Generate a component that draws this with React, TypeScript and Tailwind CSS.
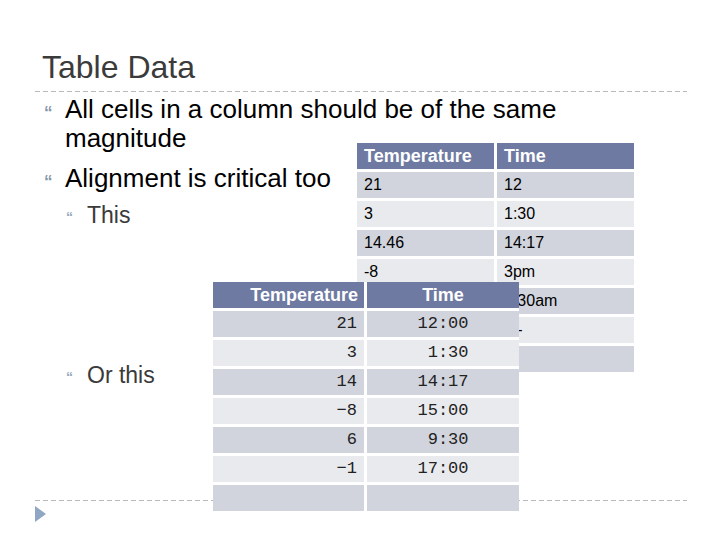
import React from 'react';

type Row = [string, string];

const looseRows: Row[] = [
  ['21', '12'],
  ['3', '1:30'],
  ['14.46', '14:17'],
  ['-8', '3pm'],
  ['6', '9:30am'],
  ['-1', '5:-'],
  ['', ''],
];

const alignedRows: Row[] = [
  ['21', '12:00'],
  ['3', ' 1:30'],
  ['14', '14:17'],
  ['\u22128', '15:00'],
  ['6', ' 9:30'],
  ['\u22121', '17:00'],
  ['', ''],
];

const Bullet = ({ small }: { small?: boolean }) => (
  <span
    className={
      small
        ? 'w-[21px] shrink-0 pt-[2px] text-[14px] font-bold text-[#9aa9ba]'
        : 'w-[21px] shrink-0 pt-[3px] text-[17px] font-bold text-[#8797ab]'
    }
  >
    {'\u201C'}
  </span>
);

const DashedLine = () => (
  <div className="ml-[35px] w-[652px] h-px bg-[repeating-linear-gradient(90deg,#b8b8b8_0_5px,transparent_5px_8px)]" />
);

export default function App() {
  return (
    <div className="relative w-[720px] h-[540px] bg-white flex flex-col font-['Liberation_Sans',Arial,sans-serif] overflow-hidden">
      {/* Title */}
      <h1 className="ml-[42px] mt-[51px] text-[32px] leading-[32px] text-[#3b3b3b]">Table Data</h1>
      <div className="mt-[8px]">
        <DashedLine />
      </div>

      {/* Bullets */}
      <ul className="ml-[44px] mt-[3px] flex flex-col">
        <li className="flex items-start text-[26px] leading-[29px] text-black">
          <Bullet />
          <span className="flex flex-col items-start">
            <span>All cells in a column should be of the same</span>
            <span>magnitude</span>
          </span>
        </li>
        <li className="flex items-start mt-[11px] text-[26px] leading-[29px] text-black">
          <Bullet />
          <span>Alignment is critical too</span>
        </li>
        <li className="flex items-start ml-[22px] mt-[6px] text-[23px] leading-[27px] text-[#3a3a3a]">
          <Bullet small />
          <span>This</span>
        </li>
        <li className="flex items-start ml-[22px] mt-[131px] text-[23px] leading-[27px] text-[#3a3a3a]">
          <Bullet small />
          <span>Or this</span>
        </li>
      </ul>

      {/* Footer */}
      <div className="mt-auto pb-[18px] flex flex-col gap-[5px]">
        <DashedLine />
        <svg className="ml-[35px]" width="12" height="16" viewBox="0 0 12 16">
          <polygon points="0,0 11,8 0,16" fill="#8fa6c4" />
        </svg>
      </div>

      {/* Loose table (behind) */}
      <div className="absolute left-[357px] top-[143px] z-10 grid grid-cols-[137px_137px] gap-[3px] bg-white">
        <div className="h-[26px] bg-[#6e7aa2] pl-[7px] text-[18px] leading-[26px] font-bold text-white">Temperature</div>
        <div className="h-[26px] bg-[#6e7aa2] pl-[7px] text-[18px] leading-[26px] font-bold text-white">Time</div>
        {looseRows.map((r, i) => (
          <React.Fragment key={i}>
            <div className={`h-[26px] pl-[7px] text-[16px] leading-[26px] text-black ${i % 2 === 0 ? 'bg-[#d1d4dd]' : 'bg-[#e9eaee]'}`}>{r[0]}</div>
            <div className={`h-[26px] pl-[7px] text-[16px] leading-[26px] text-black ${i % 2 === 0 ? 'bg-[#d1d4dd]' : 'bg-[#e9eaee]'}`}>{r[1]}</div>
          </React.Fragment>
        ))}
      </div>

      {/* Aligned table (front) */}
      <div className="absolute left-[213px] top-[282px] z-20 grid grid-cols-[151px_152px] gap-[3px] bg-white">
        <div className="h-[26px] bg-[#6e7aa2] pr-[6px] text-right text-[18px] leading-[26px] font-bold text-white">Temperature</div>
        <div className="h-[26px] bg-[#6e7aa2] text-center text-[18px] leading-[26px] font-bold text-white">Time</div>
        {alignedRows.map((r, i) => (
          <React.Fragment key={i}>
            <div className={`h-[26px] pr-[7px] text-right font-['Liberation_Mono',monospace] text-[17px] leading-[26px] text-[#222] whitespace-pre ${i % 2 === 0 ? 'bg-[#d1d4dd]' : 'bg-[#e9eaee]'}`}>{r[0]}</div>
            <div className={`h-[26px] text-center font-['Liberation_Mono',monospace] text-[17px] leading-[26px] text-[#222] whitespace-pre ${i % 2 === 0 ? 'bg-[#d1d4dd]' : 'bg-[#e9eaee]'}`}>{r[1]}</div>
          </React.Fragment>
        ))}
      </div>
    </div>
  );
}
